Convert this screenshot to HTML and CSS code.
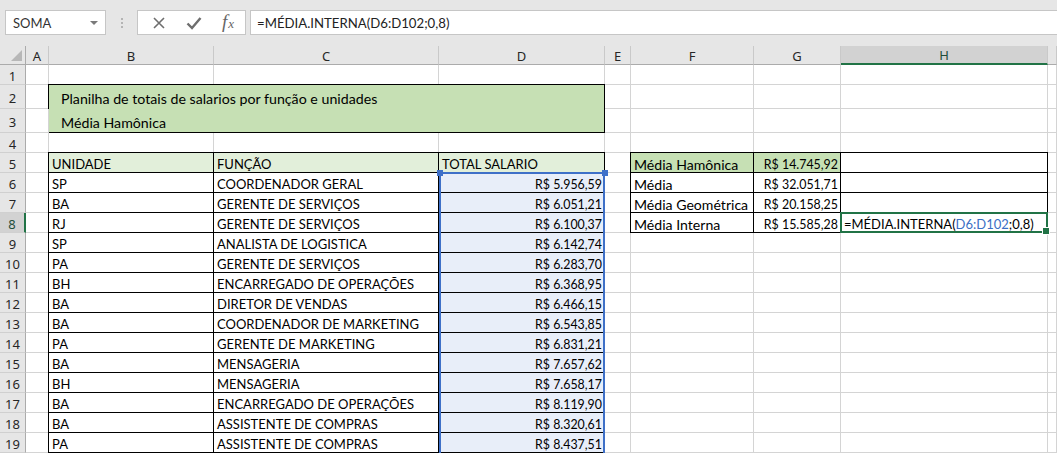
FILE: index.html
```html
<!DOCTYPE html>
<html lang="pt">
<head>
<meta charset="utf-8">
<title>Planilha</title>
<link rel="stylesheet" href="styles.css">
</head>
<body>
<div class="app">
  <div class="toolbar">
    <div class="namebox"><span>SOMA</span><span class="caret"></span></div>
    <div class="dots"><i></i><i></i><i></i></div>
    <div class="btns">
      <svg class="ico" width="14" height="14" viewBox="0 0 14 14"><path d="M2 2 L12 12 M12 2 L2 12" stroke="#6e6e6e" stroke-width="1.6" fill="none"/></svg>
      <svg class="ico" width="16" height="14" viewBox="0 0 16 14"><path d="M1.5 7.5 L6 12 L14.5 2" stroke="#6e6e6e" stroke-width="2.4" fill="none"/></svg>
      <span class="fx">f<span class="fxx">x</span></span>
    </div>
    <div class="formula">=MÉDIA.INTERNA(D6:D102;0,8)</div>
  </div>

  <div class="sheet">
    <div class="corner"></div>
    <div class="ch">A</div><div class="ch">B</div><div class="ch">C</div><div class="ch">D</div><div class="ch">E</div><div class="ch">F</div><div class="ch">G</div><div class="ch sel">H</div><div class="ch"></div>

    <div class="rh">1</div><div class="c"></div><div class="c"></div><div class="c"></div><div class="c"></div><div class="c"></div><div class="c"></div><div class="c"></div><div class="c"></div><div class="c"></div>

    <div class="rh">2</div><div class="c"></div>
    <div class="title"><div>Planilha de totais de salarios por função e unidades</div><div>Média Hamônica</div></div>
    <div class="c"></div><div class="c"></div><div class="c"></div><div class="c"></div><div class="c"></div>

    <div class="rh">3</div><div class="c"></div><div class="c"></div><div class="c"></div><div class="c"></div><div class="c"></div><div class="c"></div>

    <div class="rh">4</div><div class="c"></div><div class="c"></div><div class="c"></div><div class="c"></div><div class="c"></div><div class="c"></div><div class="c"></div><div class="c"></div><div class="c"></div>

    <div class="rh">5</div><div class="c"></div><div class="c t hd">UNIDADE</div><div class="c t hd">FUNÇÃO</div><div class="c t hd">TOTAL SALARIO</div><div class="c"></div><div class="c t gr lc">Média Hamônica</div><div class="c t gr r">R$ 14.745,92</div><div class="c t"></div><div class="c"></div>

    <div class="rh">6</div><div class="c"></div><div class="c t">SP</div><div class="c t">COORDENADOR GERAL</div><div class="c t bl r">R$ 5.956,59</div><div class="c"></div><div class="c t lc">Média</div><div class="c t r">R$ 32.051,71</div><div class="c t"></div><div class="c"></div>

    <div class="rh">7</div><div class="c"></div><div class="c t">BA</div><div class="c t">GERENTE DE SERVIÇOS</div><div class="c t bl r">R$ 6.051,21</div><div class="c"></div><div class="c t lc">Média Geométrica</div><div class="c t r">R$ 20.158,25</div><div class="c t"></div><div class="c"></div>

    <div class="rh sel">8</div><div class="c"></div><div class="c t">RJ</div><div class="c t">GERENTE DE SERVIÇOS</div><div class="c t bl r">R$ 6.100,37</div><div class="c"></div><div class="c t lc">Média Interna</div><div class="c t r">R$ 15.585,28</div><div class="c t act">=MÉDIA.INTERNA(<span class="ref">D6:D102</span>;0,8)</div><div class="c"></div>

    <div class="rh">9</div><div class="c"></div><div class="c t">SP</div><div class="c t">ANALISTA DE LOGISTICA</div><div class="c t bl r">R$ 6.142,74</div><div class="c"></div><div class="c"></div><div class="c"></div><div class="c"></div><div class="c"></div>

    <div class="rh">10</div><div class="c"></div><div class="c t">PA</div><div class="c t">GERENTE DE SERVIÇOS</div><div class="c t bl r">R$ 6.283,70</div><div class="c"></div><div class="c"></div><div class="c"></div><div class="c"></div><div class="c"></div>

    <div class="rh">11</div><div class="c"></div><div class="c t">BH</div><div class="c t">ENCARREGADO DE OPERAÇÕES</div><div class="c t bl r">R$ 6.368,95</div><div class="c"></div><div class="c"></div><div class="c"></div><div class="c"></div><div class="c"></div>

    <div class="rh">12</div><div class="c"></div><div class="c t">BA</div><div class="c t">DIRETOR DE VENDAS</div><div class="c t bl r">R$ 6.466,15</div><div class="c"></div><div class="c"></div><div class="c"></div><div class="c"></div><div class="c"></div>

    <div class="rh">13</div><div class="c"></div><div class="c t">BA</div><div class="c t">COORDENADOR DE MARKETING</div><div class="c t bl r">R$ 6.543,85</div><div class="c"></div><div class="c"></div><div class="c"></div><div class="c"></div><div class="c"></div>

    <div class="rh">14</div><div class="c"></div><div class="c t">PA</div><div class="c t">GERENTE DE MARKETING</div><div class="c t bl r">R$ 6.831,21</div><div class="c"></div><div class="c"></div><div class="c"></div><div class="c"></div><div class="c"></div>

    <div class="rh">15</div><div class="c"></div><div class="c t">BA</div><div class="c t">MENSAGERIA</div><div class="c t bl r">R$ 7.657,62</div><div class="c"></div><div class="c"></div><div class="c"></div><div class="c"></div><div class="c"></div>

    <div class="rh">16</div><div class="c"></div><div class="c t">BH</div><div class="c t">MENSAGERIA</div><div class="c t bl r">R$ 7.658,17</div><div class="c"></div><div class="c"></div><div class="c"></div><div class="c"></div><div class="c"></div>

    <div class="rh">17</div><div class="c"></div><div class="c t">BA</div><div class="c t">ENCARREGADO DE OPERAÇÕES</div><div class="c t bl r">R$ 8.119,90</div><div class="c"></div><div class="c"></div><div class="c"></div><div class="c"></div><div class="c"></div>

    <div class="rh">18</div><div class="c"></div><div class="c t">BA</div><div class="c t">ASSISTENTE DE COMPRAS</div><div class="c t bl r">R$ 8.320,61</div><div class="c"></div><div class="c"></div><div class="c"></div><div class="c"></div><div class="c"></div>

    <div class="rh">19</div><div class="c"></div><div class="c t">PA</div><div class="c t">ASSISTENTE DE COMPRAS</div><div class="c t bl r">R$ 8.437,51</div><div class="c"></div><div class="c"></div><div class="c"></div><div class="c"></div><div class="c"></div>

    <div class="range"></div>
  </div>
</div>
</body>
</html>
```

FILE: styles.css
```css
* { box-sizing: border-box; }
html, body { margin: 0; padding: 0; }
body {
  background: #e6e6e6;
  font-family: Lato, "Liberation Sans", sans-serif;
  color: #000;
  overflow: hidden;
}
.app { width: 1057px; height: 453px; overflow: hidden; }

/* toolbar */
.toolbar {
  height: 46px;
  display: flex;
  align-items: flex-start;
  padding-top: 10px;
  padding-left: 5px;
}
.namebox {
  width: 101px;
  height: 25px;
  background: #fff;
  border: 1px solid #c6c6c6;
  display: flex;
  align-items: center;
  justify-content: space-between;
  padding: 0 6px 0 7px;
  font-size: 13px;
  color: #333;
}
.caret {
  width: 0; height: 0;
  border-left: 4px solid transparent;
  border-right: 4px solid transparent;
  border-top: 4px solid #7a7a7a;
  margin-right: 1px;
}
.dots {
  width: 31px;
  height: 25px;
  display: flex;
  flex-direction: column;
  align-items: center;
  justify-content: center;
  gap: 2px;
}
.dots i { display: block; width: 2px; height: 2px; background: #b4b4b4; }
.btns {
  width: 109px;
  height: 25px;
  background: #fff;
  border: 1px solid #c6c6c6;
  display: flex;
  align-items: center;
  padding-left: 14px;
  gap: 20px;
}
.fx {
  font-family: "Liberation Serif", serif;
  font-style: italic;
  font-size: 19px;
  line-height: 19px;
  color: #666;
  margin-left: 0;
  margin-top: -1px;
  letter-spacing: 0;
}
.fxx { font-size: 13px; margin-left: 1px; }
.formula {
  flex: 1;
  margin-left: 4px;
  height: 25px;
  background: #fff;
  border: 1px solid #c6c6c6;
  border-right: none;
  padding-left: 6px;
  display: flex;
  align-items: center;
  font-size: 13.2px;
  color: #222;
}

/* sheet */
.sheet {
  position: relative;
  display: grid;
  grid-template-columns: 26px 23px 165px 225px 166px 26px 123px 87px 207px 1fr;
  grid-template-rows: 19px 20px 24px 24px repeat(17, 20px);
  background: #fff;
  font-size: 13px;
}
.corner {
  background: #e6e6e6;
  border-right: 1px solid #ababab;
  border-bottom: 1px solid #ababab;
  position: relative;
}
.corner::after {
  content: "";
  position: absolute;
  right: 3px;
  bottom: 3px;
  width: 0; height: 0;
  border-left: 11px solid transparent;
  border-bottom: 11px solid #b7b7b7;
}
.ch {
  background: #e6e6e6;
  border-right: 1px solid #c9c9c9;
  border-bottom: 1px solid #ababab;
  display: flex;
  align-items: center;
  justify-content: center;
  font-family: "Noto Sans", sans-serif;
  font-size: 13px;
  color: #262626;
  padding-top: 1px;
}
.ch.sel {
  background: #d2d2d2;
  border-bottom: 2px solid #217346;
  color: #1f4e3a;
}
.rh {
  background: #e6e6e6;
  border-right: 1px solid #ababab;
  border-bottom: 1px solid #d0d0d0;
  display: flex;
  align-items: center;
  justify-content: center;
  font-family: "Noto Sans", sans-serif;
  font-size: 13px;
  color: #262626;
  padding-top: 2px;
}
.rh.sel {
  background: #d2d2d2;
  border-right: 2px solid #217346;
  color: #1f4e3a;
}
.c {
  border-right: 1px solid #d4d4d4;
  border-bottom: 1px solid #d4d4d4;
  display: flex;
  align-items: flex-end;
  padding: 0 3px 0 3px;
  white-space: nowrap;
  line-height: 15px;
  min-width: 0;
}
.c.t {
  border: 1px solid #000;
  margin: -1px 0 0 -1px;
}
.c.r { justify-content: flex-end; padding-right: 2px; font-size: 12.4px; }
.lc { font-size: 14.1px; }
.hd { background: #e2efda; }
.gr { background: #c6e0b4; }
.bl { background: #e8eef9; }
.title {
  grid-column: span 3;
  grid-row: span 2;
  margin: -1px 0 0 -1px;
  border: 1px solid #000;
  background: #c6e0b4;
  padding-left: 12px;
  display: flex;
  flex-direction: column;
  font-size: 14.2px;
}
.title div {
  height: 24px;
  display: flex;
  align-items: center;
  padding-top: 4px;
  white-space: nowrap;
}
.act {
  position: relative;
  outline: 2px solid #217346;
  outline-offset: -2px;
  z-index: 2;
}
.act::after {
  content: "";
  position: absolute;
  right: -3px;
  bottom: -3px;
  width: 6px;
  height: 6px;
  background: #217346;
  border: 1px solid #fff;
}
.ref { color: #3b6fc4; }
.range {
  position: absolute;
  grid-column: 5 / 6;
  grid-row: 7 / 22;
  top: -1px;
  left: 0;
  right: 0;
  bottom: -10px;
  border: 2px solid #3e70c8;
  z-index: 1;
}
.range::before, .range::after {
  content: "";
  position: absolute;
  top: -4px;
  width: 6px;
  height: 6px;
  background: #3e70c8;
}
.range::before { left: -4px; }
.range::after { right: -5px; }
```
